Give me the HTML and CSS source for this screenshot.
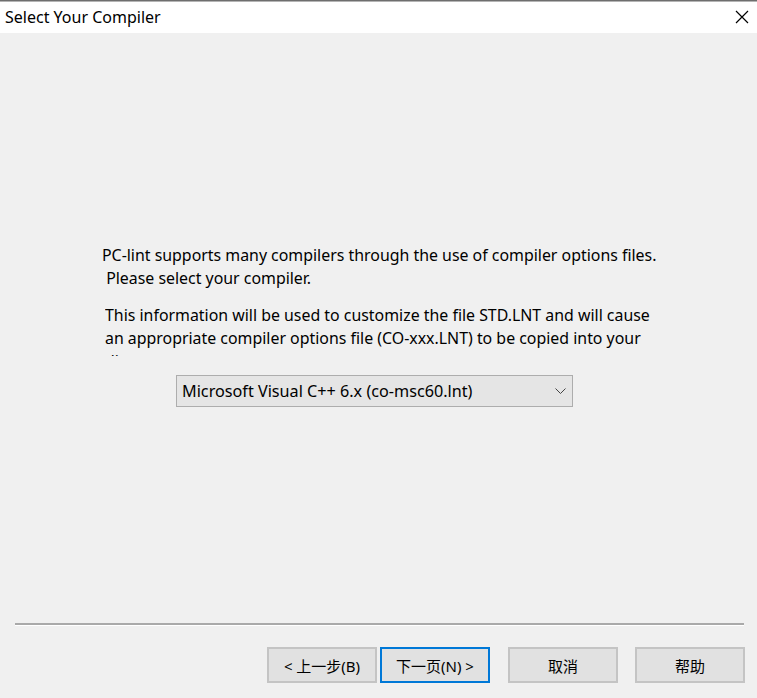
FILE: index.html
```html
<!DOCTYPE html>
<html>
<head>
<meta charset="utf-8">
<link rel="stylesheet" href="styles.css">
</head>
<body>
<div class="window">
  <div class="titlebar">
    <span class="title">Select Your Compiler</span>
    <svg class="close" width="14" height="14" viewBox="0 0 14 14"><path d="M1 1 L13 13 M13 1 L1 13" stroke="#000" stroke-width="1.2" fill="none"/></svg>
  </div>
  <div class="content">
    <div class="msg msg1">PC-lint supports many compilers through the use of compiler options files.<br>&nbsp;Please select your compiler.</div>
    <div class="msg msg2">This information will be used to customize the file STD.LNT and will cause<br>an appropriate compiler options file (CO-xxx.LNT) to be copied into your<br>directory.</div>
    <div class="select">
      <span class="select-text">Microsoft Visual C++ 6.x (co-msc60.lnt)</span>
      <svg class="chevron" width="11" height="7" viewBox="0 0 11 7"><path d="M0.5 0.5 L5.5 5.5 L10.5 0.5" stroke="#444" stroke-width="1" fill="none"/></svg>
    </div>
    <div class="spacer"></div>
    <div class="separator"></div>
    <div class="buttons">
      <button class="btn btn-back">&lt; 上一步(B)</button>
      <button class="btn btn-next">下一页(N) &gt;</button>
      <button class="btn btn-cancel">取消</button>
      <button class="btn btn-help">帮助</button>
    </div>
  </div>
</div>
</body>
</html>
```
FILE: styles.css
```css
html, body {
  margin: 0;
  padding: 0;
  background: #f0f0f0;
}
.window {
  width: 757px;
  height: 698px;
  display: flex;
  flex-direction: column;
  font-family: "Noto Sans", "Noto Sans CJK SC", sans-serif;
  color: #000;
  overflow: hidden;
}
.titlebar {
  height: 32px;
  border-top: 1px solid #6e6e6e;
  box-shadow: inset 0 1px 0 #b4b4b4;
  background: #fff;
  display: flex;
  align-items: center;
  justify-content: space-between;
  padding: 0 8px 0 5px;
  flex: none;
}
.title {
  font-size: 16px;
  color: #000;
}
.close {
  display: block;
}
.content {
  flex: 1;
  display: flex;
  flex-direction: column;
  padding-top: 211px;
}
.msg {
  font-size: 15.9px;
  line-height: 23px;
  white-space: nowrap;
}
.msg1 {
  margin-left: 102px;
}
.msg2 {
  margin-left: 105px;
  margin-top: 14px;
  height: 52px;
  overflow: hidden;
}
.select {
  margin-left: 176px;
  margin-top: 19px;
  width: 384px;
  height: 30px;
  border: 1px solid #adadad;
  background: #e5e5e5;
  display: flex;
  align-items: center;
  justify-content: space-between;
  padding: 0 6px 0 5px;
  box-sizing: content-box;
}
.select-text {
  font-size: 16.2px;
}
.chevron {
  display: block;
}
.spacer {
  flex: 1;
}
.separator {
  margin: 0 13px 0 15px;
  height: 2px;
  background: #a9a9a9;
  border-bottom: 1px solid #fff;
}
.buttons {
  display: flex;
  padding: 21px 0 15px 267px;
}
.btn {
  width: 110px;
  height: 36px;
  border: 2px solid #c4c4c4;
  background: #e1e1e1;
  font-family: "Noto Sans", "Noto Sans CJK SC", sans-serif;
  font-size: 15px;
  color: #000;
  padding: 0;
  box-sizing: border-box;
}
.btn-next {
  margin-left: 3px;
  border-color: #0078d7;
}
.btn-cancel {
  margin-left: 18px;
}
.btn-help {
  margin-left: 17px;
}
```
